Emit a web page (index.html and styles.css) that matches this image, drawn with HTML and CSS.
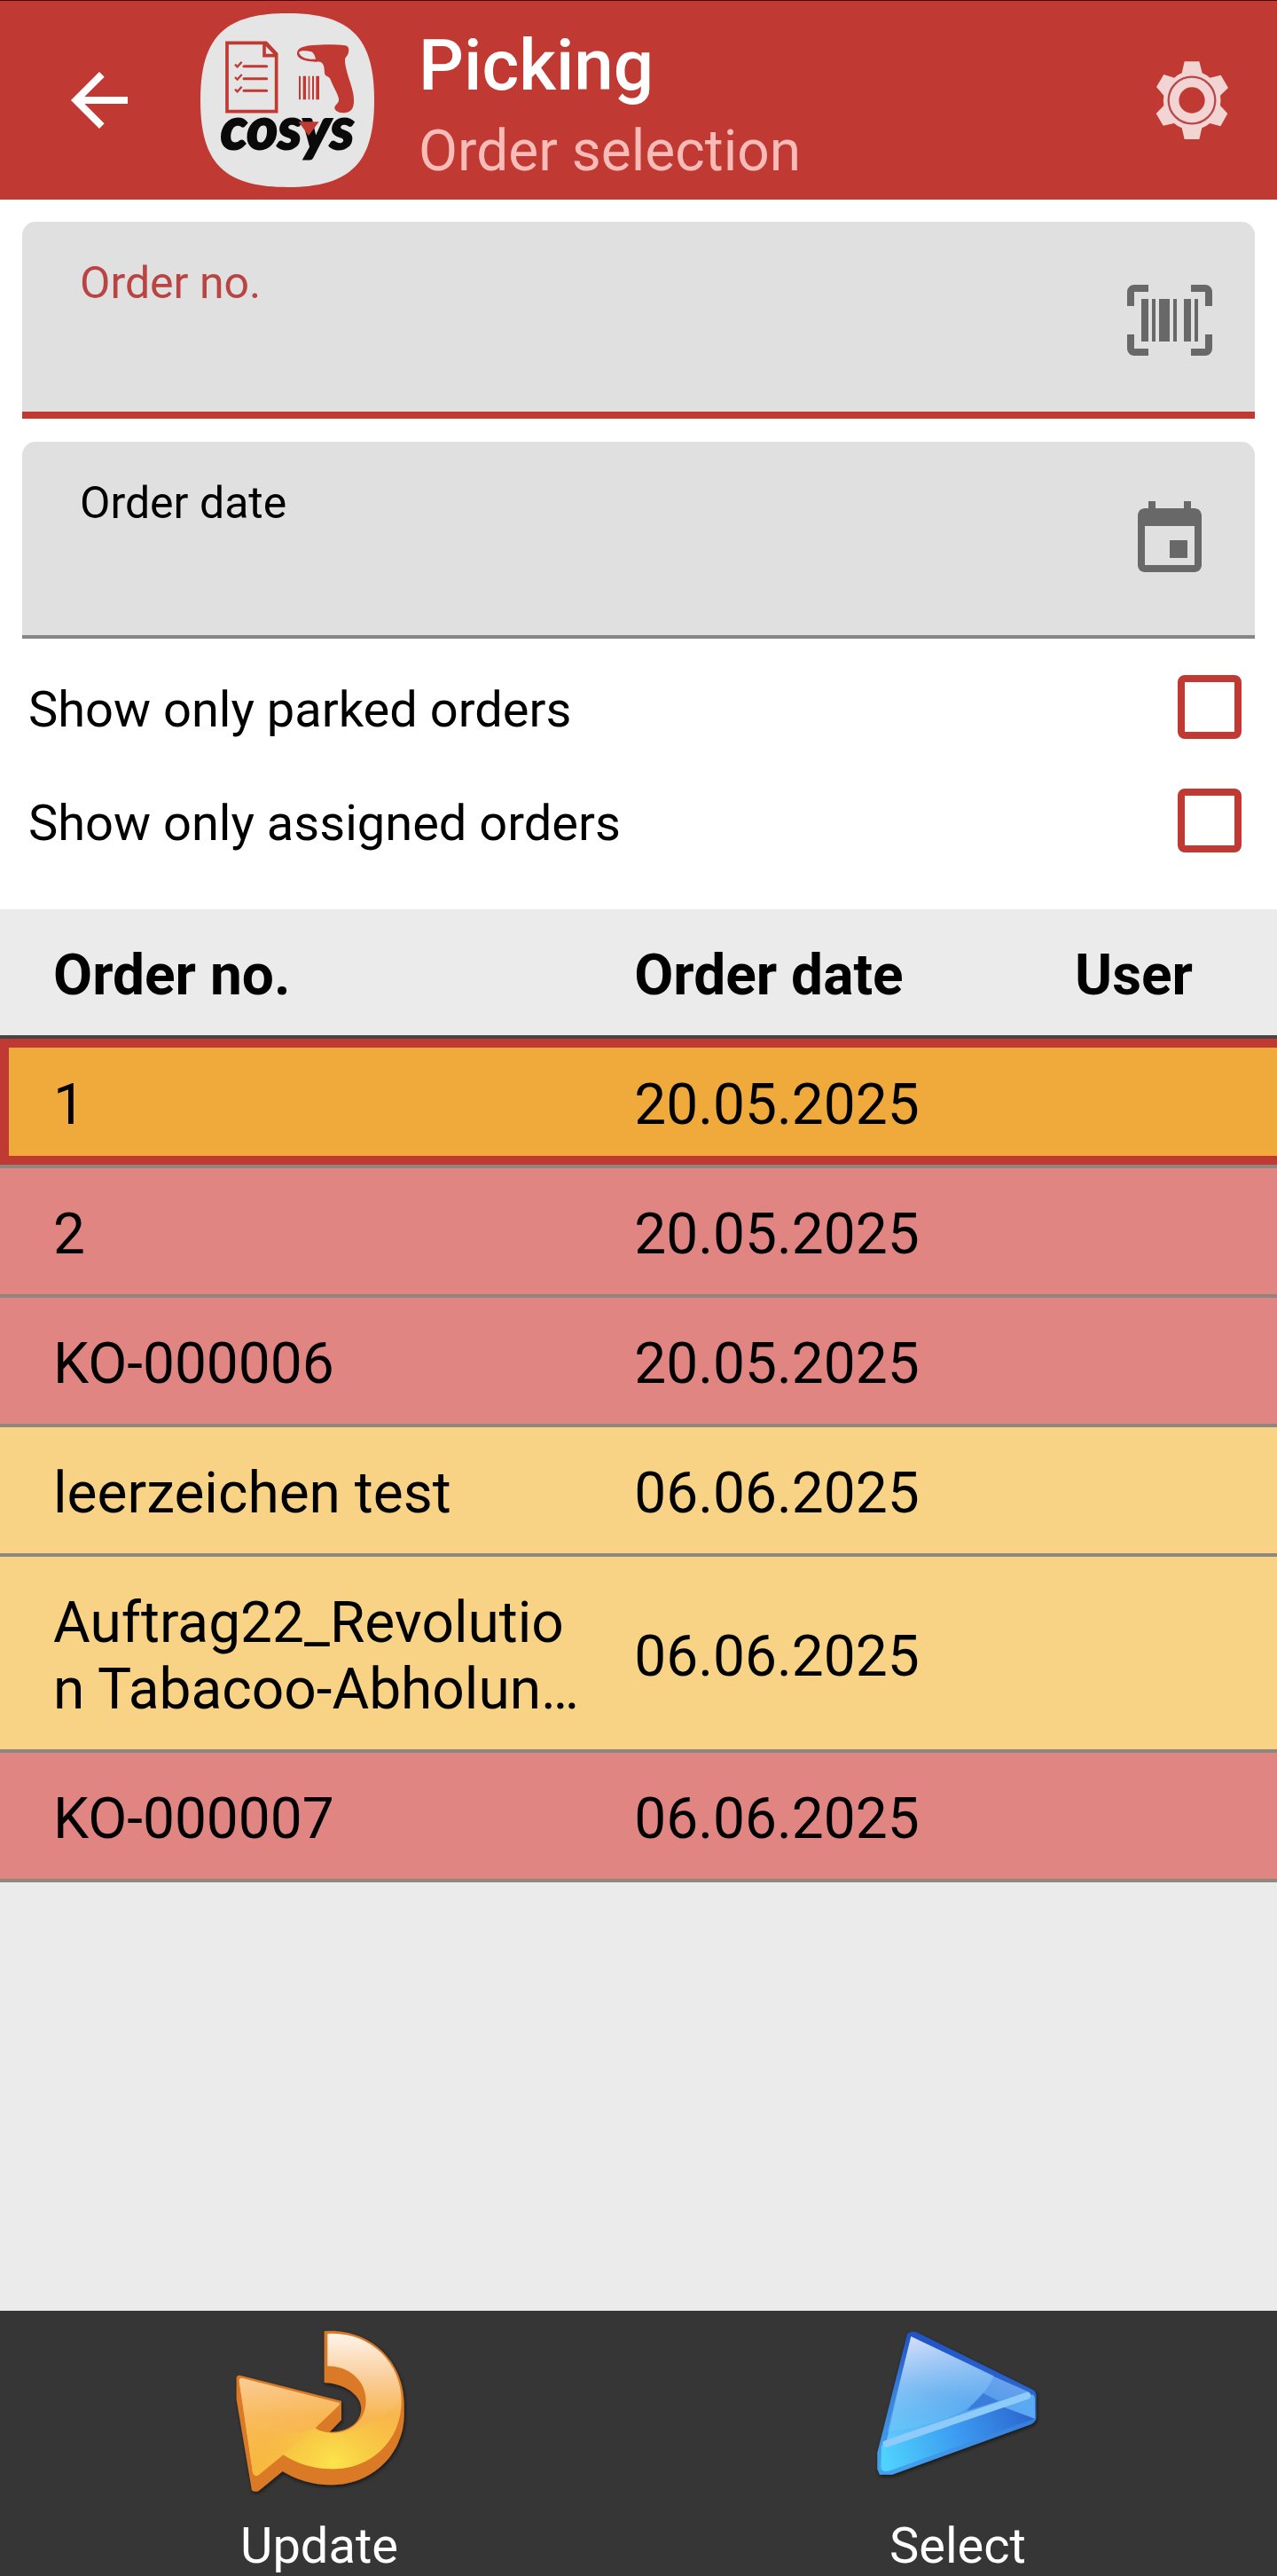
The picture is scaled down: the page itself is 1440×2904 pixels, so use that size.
FILE: index.html
```
<!DOCTYPE html>
<html lang="en">
<head>
    <meta charset="UTF-8">
    <meta name="viewport" content="width=device-width, initial-scale=1.0">
    <title>Picking - Order selection</title>
    <link rel="stylesheet" href="styles.css">
</head>
<body>
    <header class="topbar">
        <button class="icon-button" type="button" aria-label="Back">
            <svg class="icon" viewBox="0 0 24 24"><path d="M20 11H7.83l5.59-5.59L12 4l-8 8 8 8 1.41-1.41L7.83 13H20v-2z"/></svg>
        </button>
        <svg class="logo" viewBox="678 44 588 588" role="img" aria-label="Cosys">
            <path fill="#e5e5e5" d="M972 44C1190 44 1266 130 1266 338S1190 632 972 632 678 546 678 338 754 44 972 44z"/>
            <!-- checklist -->
            <g fill="none" stroke="#c03a33" stroke-width="11">
                <path d="M768 144H900L935 181V376H768z"/>
                <path d="M894 144V187H938M900 148L935 184"/>
                <path stroke-width="9" stroke-linecap="round" d="M825 223H902M825 265H902M825 306H902"/>
                <path stroke-width="7" d="M795 217l8 8 15-17M795 260l8 8 15-17M795 301l8 8 15-17"/>
            </g>
            <!-- scanner -->
            <path fill="#c03a33" fill-rule="evenodd" d="M1005 176C1008 160 1030 154 1058 152C1095 149 1140 149 1168 153C1182 156 1182 170 1177 182C1174 190 1168 192 1167 200C1166 225 1180 260 1190 295C1197 318 1200 345 1194 361C1188 377 1172 382 1154 380C1138 378 1128 368 1133 359C1138 351 1146 348 1146 336C1146 322 1128 295 1116 264C1110 256 1099 258 1098 246C1097 228 1096 216 1086 210C1080 206 1078 208 1066 208C1040 207 1002 201 1005 176zM1011 176C1016 169 1036 170 1053 174C1062 178 1066 190 1068 199C1040 201 1016 194 1011 176z"/>
            <path fill="#c03a33" d="M1011 256h6v80h-6zM1025 256h10v80h-10zM1043 256h5v80h-5zM1056 256h6v80h-6zM1069 256h11v80h-11z"/>
            <text class="logo-text" x="972" y="504" text-anchor="middle">cosys</text>
            <path fill="#c03a33" d="M1010 411H1079L1044 458z"/>
        </svg>
        <div class="titles">
            <h1>Picking</h1>
            <p>Order selection</p>
        </div>
        <button class="icon-button" type="button" aria-label="Settings">
            <svg class="icon" viewBox="288 194 288 288">
                <path fill="#f2d4d3" d="M407 207H457L467 246Q481 252 493 262L530 253L555 296L528 322Q531 338 528 356L553 383L529 426L493 416Q480 427 466 432L457 470H407L398 432Q384 427 372 416L335 424L311 383L337 356Q334 338 337 322L312 293L337 251L373 262Q384 252 398 246z"/>
                <circle cx="432" cy="338" r="79" fill="none" stroke="#b8484c" stroke-width="7"/>
                <circle cx="432" cy="338" r="44" fill="#c03a33"/>
            </svg>
        </button>
    </header>

    <form class="filters">
        <div class="field active">
            <div class="field-text">
                <label for="order-no">Order no.</label>
                <input type="text" id="order-no">
            </div>
            <button class="icon-button" type="button" aria-label="Scan barcode">
                <svg class="icon" viewBox="0 0 24 24"><path d="M4,6H6V18H4V6M7,6H8V18H7V6M9,6H12V18H9V6M13,6H14V18H13V6M16,6H18V18H16V6M19,6H20V18H19V6M2,4V8H0V4A2,2 0 0,1 2,2H6V4H2M22,2A2,2 0 0,1 24,4V8H22V4H18V2H22M2,16V20H6V22H2A2,2 0 0,1 0,20V16H2M22,20V16H24V20A2,2 0 0,1 22,22H18V20H22Z"/></svg>
            </button>
        </div>
        <div class="field">
            <div class="field-text">
                <label for="order-date">Order date</label>
                <input type="text" id="order-date">
            </div>
            <button class="icon-button" type="button" aria-label="Pick date">
                <svg class="icon" viewBox="0 0 24 24"><path d="M17 12h-5v5h5v-5zM16 1v2H8V1H6v2H5c-1.11 0-1.99.9-1.99 2L3 19c0 1.1.89 2 2 2h14c1.1 0 2-.9 2-2V5c0-1.1-.9-2-2-2h-1V1h-2zm3 18H5V8h14v11z"/></svg>
            </button>
        </div>
        <div class="checks">
            <div class="check">
                <label for="parked">Show only parked orders</label>
                <input type="checkbox" id="parked">
            </div>
            <div class="check">
                <label for="assigned">Show only assigned orders</label>
                <input type="checkbox" id="assigned">
            </div>
        </div>
    </form>

    <main class="orders">
        <table>
            <colgroup>
                <col class="col-no">
                <col class="col-date">
                <col>
            </colgroup>
            <thead>
                <tr><th>Order no.</th><th>Order date</th><th>User</th></tr>
            </thead>
            <tbody>
                <tr class="selected"><td>1</td><td>20.05.2025</td><td></td></tr>
                <tr class="red"><td>2</td><td>20.05.2025</td><td></td></tr>
                <tr class="red"><td>KO-000006</td><td>20.05.2025</td><td></td></tr>
                <tr class="yellow"><td>leerzeichen test</td><td>06.06.2025</td><td></td></tr>
                <tr class="yellow"><td>Auftrag22_Revolution Tabacoo-Abholun…</td><td>06.06.2025</td><td></td></tr>
                <tr class="red"><td>KO-000007</td><td>06.06.2025</td><td></td></tr>
            </tbody>
        </table>
    </main>

    <footer class="actions">
        <button class="action" type="button">
            <svg class="action-icon" viewBox="180 120 600 600" aria-hidden="true">
                <defs>
                    <linearGradient id="gold" x1="0" y1="145" x2="0" y2="630" gradientUnits="userSpaceOnUse">
                        <stop offset="0" stop-color="#fff6ee"/>
                        <stop offset="0.3" stop-color="#fad0a0"/>
                        <stop offset="0.6" stop-color="#f8b750"/>
                        <stop offset="1" stop-color="#f9d640"/>
                    </linearGradient>
                    <radialGradient id="glow" cx="530" cy="590" r="270" gradientUnits="userSpaceOnUse">
                        <stop offset="0" stop-color="#fbe44c"/>
                        <stop offset="1" stop-color="#f7b03a" stop-opacity="0.2"/>
                    </radialGradient>
                    <linearGradient id="head" x1="200" y1="300" x2="290" y2="640" gradientUnits="userSpaceOnUse">
                        <stop offset="0" stop-color="#fbcb94"/>
                        <stop offset="0.5" stop-color="#f9ba5e"/>
                        <stop offset="1" stop-color="#f9a735"/>
                    </linearGradient>
                    <filter id="shadow" x="-10%" y="-10%" width="120%" height="120%">
                        <feDropShadow dx="3" dy="6" stdDeviation="6" flood-color="#000" flood-opacity="0.6"/>
                    </filter>
                </defs>
                <path filter="url(#shadow)" fill="#db7a27" d="M497 144C650 132 765 245 767 385V430C765 560 660 664 520 664C455 664 400 645 356 618L280 680Q266 692 252 682L200 375V300Q203 291 214 294L555 380V444L515 485C575 486 622 455 622 405C622 360 565 320 497 318z"/>
                <path fill="url(#gold)" d="M508 153C645 143 758 245 758 380C758 515 655 610 525 610C460 610 405 592 358 562L275 630Q261 638 255 622L209 312Q210 300 222 304L548 387Q550 393 545 397L466 472C485 484 505 489 530 488C590 485 638 440 638 380C638 310 580 262 508 262z"/>
                <path fill="url(#head)" d="M209 312Q210 300 222 304L548 387L466 472L358 562L275 630Q261 638 255 622z" opacity="0.6"/>
                <path fill="url(#glow)" d="M232 458C300 490 390 505 466 472C485 484 505 489 530 488C640 486 705 432 758 370C760 515 655 610 525 610C460 610 405 592 358 562L275 630Q261 638 255 622z"/>
            </svg>
            <span>Update</span>
        </button>
        <button class="action" type="button">
            <svg class="action-icon" viewBox="180 120 600 600" aria-hidden="true">
                <defs>
                    <linearGradient id="edge" x1="500" y1="150" x2="380" y2="620" gradientUnits="userSpaceOnUse">
                        <stop offset="0" stop-color="#1c49c0"/>
                        <stop offset="0.5" stop-color="#357fdc"/>
                        <stop offset="1" stop-color="#43a0ec"/>
                    </linearGradient>
                    <linearGradient id="face" x1="440" y1="170" x2="340" y2="530" gradientUnits="userSpaceOnUse">
                        <stop offset="0" stop-color="#7fa5ec"/>
                        <stop offset="0.5" stop-color="#4f9ceb"/>
                        <stop offset="1" stop-color="#5fc7fb"/>
                    </linearGradient>
                    <linearGradient id="side" x1="230" y1="580" x2="740" y2="420" gradientUnits="userSpaceOnUse">
                        <stop offset="0" stop-color="#4fd3fd"/>
                        <stop offset="0.5" stop-color="#3c9af0"/>
                        <stop offset="1" stop-color="#2a63cf"/>
                    </linearGradient>
                    <linearGradient id="shine" x1="330" y1="160" x2="430" y2="470" gradientUnits="userSpaceOnUse">
                        <stop offset="0" stop-color="#e0e4fa" stop-opacity="0.9"/>
                        <stop offset="1" stop-color="#70cdfb" stop-opacity="0.2"/>
                    </linearGradient>
                </defs>
                <path filter="url(#shadow)" fill="url(#edge)" d="M308 158Q315 142 340 147L735 343Q745 350 745 362V438Q744 450 728 459L258 629H216L208 610V555L222 500z"/>
                <path fill="url(#face)" d="M322 162L600 296L722 350L236 528Z"/>
                <path fill="url(#side)" d="M236 528L728 362L738 440L250 616Q225 624 220 605L222 530z"/>
                <path fill="#5aa9f2" d="M620 395L732 358Q741 362 741 375V440z"/>
                <path fill="#2a67d2" opacity="0.6" d="M565 353L618 380L510 413z"/>
                <path fill="url(#shine)" d="M322 162L602 295C570 370 510 415 440 440C370 465 300 475 242 484z"/>
                <path stroke="#8ecbfa" stroke-width="24" stroke-linecap="round" d="M238 525L715 362"/>
            </svg>
            <span>Select</span>
        </button>
    </footer>
</body>
</html>
```
FILE: styles.css
```
* {
    box-sizing: border-box;
}
body {
    display: flex;
    flex-direction: column;
    min-height: 100vh;
    margin: 0;
    font-family: Roboto, sans-serif;
    color: #000;
    background-color: #fff;
}
button {
    padding: 0;
    border: none;
    background: none;
    font-family: inherit;
    cursor: pointer;
}
.icon-button {
    flex: none;
    width: 96px;
    height: 96px;
}
.icon {
    display: block;
    width: 96px;
    height: 96px;
    fill: currentColor;
}

/* Top bar */
.topbar {
    display: flex;
    align-items: center;
    height: 225px;
    padding: 0 48px 0 64px;
    border-top: 1px solid #4a0808;
    color: #fff;
    background-color: #c03a33;
}
.topbar .icon-button {
    color: #fff;
}
.logo {
    flex: none;
    width: 196px;
    height: 196px;
    margin: 0 50px 0 66px;
}
.logo-text {
    font-family: Lato, sans-serif;
    font-size: 200px;
    font-weight: 900;
    font-style: italic;
    fill: #0a0a0a;
    stroke: #0a0a0a;
    stroke-width: 6px;
}
.titles {
    flex: 1;
    padding-top: 8px;
}
.titles h1 {
    margin: 0 0 12px;
    font-size: 80px;
    line-height: 94px;
    font-weight: 500;
}
.titles p {
    margin: 0;
    font-size: 64px;
    line-height: 75px;
    color: #f7bcb8;
}

/* Filters */
.filters {
    display: flex;
    flex-direction: column;
    gap: 26px;
    padding: 25px 25px 36px;
}
.field {
    display: flex;
    align-items: center;
    height: 222px;
    padding: 0 48px 0 65px;
    border-radius: 15px 15px 0 0;
    background-color: #e0e0e0;
    box-shadow: inset 0 -4px #838683;
}
.field.active {
    box-shadow: inset 0 -8px #c03a33;
}
.field-text {
    display: flex;
    flex: 1;
    flex-direction: column;
    height: 100%;
    padding: 40px 0 20px;
}
.field-text label {
    font-size: 50px;
    line-height: 58px;
}
.field.active label {
    color: #b94442;
}
.field-text input {
    flex: 1;
    width: 100%;
    min-height: 0;
    padding: 0;
    border: none;
    outline: none;
    background: none;
    font: inherit;
    font-size: 56px;
}
.field .icon-button {
    color: #686868;
}
.checks {
    margin-top: -13px;
}
.check {
    display: flex;
    align-items: center;
    justify-content: space-between;
    height: 128px;
    padding: 0 15px 0 7px;
}
.check label {
    padding-top: 5px;
    font-size: 56px;
    line-height: 66px;
}
.check input {
    appearance: none;
    width: 72px;
    height: 72px;
    margin: 0;
    border: 8px solid #c03a33;
    border-radius: 8px;
    background-color: #fff;
}
.check input:checked {
    background-color: #c03a33;
}

/* Orders */
.orders {
    flex: 1;
    background-color: #ebebeb;
}
table {
    width: 100%;
    table-layout: fixed;
    border-collapse: separate;
    border-spacing: 0;
    font-size: 64px;
    line-height: 75px;
}
.col-no {
    width: 48%;
}
.col-date {
    width: 34.5%;
}
th, td {
    padding: 37px 28px 30px 24px;
    border-bottom: 4px solid #8e8680;
    text-align: left;
    overflow-wrap: anywhere;
}
th {
    border-bottom-color: #474445;
    font-weight: 700;
}
th:first-child, td:first-child {
    padding-left: 60px;
}
.selected td {
    background-color: #f0aa3b;
    box-shadow: inset 0 10px #c03a33, inset 0 -10px #c03a33;
}
.selected td:first-child {
    box-shadow: inset 0 10px #c03a33, inset 0 -10px #c03a33, inset 10px 0 #c03a33;
}
.red td {
    background-color: #e18582;
}
.yellow td {
    background-color: #f8d386;
}

/* Bottom actions */
.actions {
    display: flex;
    background-color: #363636;
}
.action {
    display: flex;
    flex: 1;
    flex-direction: column;
    align-items: center;
    gap: 17px;
    padding: 15px 0 1px;
    color: #fff;
    font-size: 56px;
    line-height: 66px;
}
.action-icon {
    width: 200px;
    height: 200px;
}
```
